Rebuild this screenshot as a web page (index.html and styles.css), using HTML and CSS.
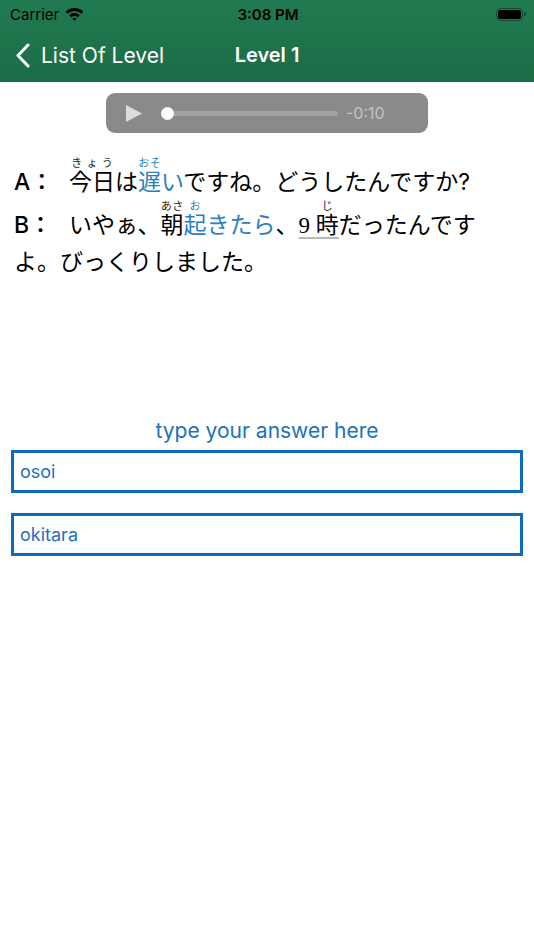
FILE: index.html
```html
<!DOCTYPE html>
<html lang="ja">
<head>
  <meta charset="UTF-8">
  <title>Level 1</title>
  <link rel="stylesheet" href="styles.css">
</head>
<body>

  <header class="topbar">
    <div class="status-bar">
      <div class="carrier">
        Carrier
        <svg class="wifi" width="19" height="13" viewBox="0 0 18 13">
          <path d="M0.16 3.66 A12.5 12.5 0 0 1 17.84 3.66 L15.72 5.78 A9.5 9.5 0 0 0 2.28 5.78 Z"/>
          <path d="M3.7 7.2 A7.5 7.5 0 0 1 14.3 7.2 L12.18 9.32 A4.5 4.5 0 0 0 5.82 9.32 Z"/>
          <path d="M9 12.8 L6.9 10.7 A3 3 0 0 1 11.1 10.7 Z"/>
        </svg>
      </div>
      <div class="clock">3:08 PM</div>
      <div class="battery-wrap">
        <div class="battery"><span class="battery-level"></span></div>
        <span class="battery-nub"></span>
      </div>
    </div>
    <nav class="nav-bar">
      <a class="back-link" href="#">
        <svg width="14" height="25" viewBox="0 0 14 25">
          <path d="M12 2 L2 12.5 L12 23" fill="none" stroke="#fff" stroke-width="3" stroke-linecap="round" stroke-linejoin="round"/>
        </svg>
        List Of Level
      </a>
      <h1 class="nav-title">Level 1</h1>
      <div></div>
    </nav>
  </header>

  <div class="player">
    <svg class="play-btn" width="16" height="17" viewBox="0 0 16 17">
      <path d="M0 0 L16 8.5 L0 17 Z"/>
    </svg>
    <div class="track">
      <span class="thumb"></span>
    </div>
    <span class="time-left">-0:10</span>
  </div>

  <div class="dialog">
    <p class="line">
      <span class="speaker">A：</span><ruby>今日<rt>きょう</rt></ruby>は<ruby class="target">遅<rt>おそ</rt></ruby><span class="target">い</span>ですね。どうしたんですか<span class="latin">?</span>
    </p>
    <p class="line">
      <span class="speaker">B：</span>いやぁ、<ruby>朝<rt>あさ</rt></ruby><ruby class="target">起<rt>お</rt></ruby><span class="target">きたら</span>、<span class="counter"><span class="digit">9 </span><ruby>時<rt>じ</rt></ruby></span>だったんですよ。びっくりしました。
    </p>
  </div>

  <section class="answers">
    <div class="answers-title">type your answer here</div>
    <input class="answer-input" type="text" value="osoi">
    <input class="answer-input" type="text" value="okitara">
  </section>

</body>
</html>
```

FILE: styles.css
```css
* {
  box-sizing: border-box;
}

body {
  margin: 0;
  padding: 0;
  background: #fff;
  font-family: Inter, "Noto Sans CJK JP", sans-serif;
  color: #000;
}

.topbar {
  height: 82px;
  background: linear-gradient(#217b51, #1c6c46);
}

.status-bar {
  height: 28px;
  display: grid;
  grid-template-columns: 1fr auto 1fr;
  align-items: center;
  padding: 0 8px 0 10px;
  font-size: 15px;
}

.carrier {
  display: flex;
  align-items: center;
  gap: 6px;
}

.wifi path {
  fill: #000;
}

.clock {
  font-weight: 600;
}

.battery-wrap {
  justify-self: end;
  display: flex;
  align-items: center;
}

.battery {
  width: 27px;
  height: 13px;
  border: 1px solid #10502f;
  border-radius: 4px;
  padding: 1px;
  display: flex;
}

.battery-level {
  flex: 1;
  background: #000;
  border-radius: 2px;
}

.battery-nub {
  width: 2px;
  height: 4px;
  margin-left: 1px;
  background: #10502f;
  border-radius: 0 1px 1px 0;
}

.nav-bar {
  height: 54px;
  display: grid;
  grid-template-columns: 1fr auto 1fr;
  align-items: center;
  color: #fff;
}

.back-link {
  display: flex;
  align-items: center;
  gap: 11px;
  padding-left: 16px;
  color: #fff;
  text-decoration: none;
  font-size: 21px;
}

.nav-title {
  margin: 0;
  font-size: 20px;
  font-weight: 600;
}

.player {
  width: 322px;
  height: 40px;
  margin: 11px auto 0;
  background: #8a8a8a;
  border-radius: 9px;
  display: flex;
  align-items: center;
  padding: 0 0 0 20px;
}

.play-btn path {
  fill: #dcdcdc;
}

.track {
  position: relative;
  width: 171px;
  height: 5px;
  margin-left: 25px;
  background: #a2a2a2;
  border-radius: 3px;
}

.thumb {
  position: absolute;
  left: -6px;
  top: -4px;
  width: 13px;
  height: 13px;
  border-radius: 50%;
  background: #fff;
}

.time-left {
  margin-left: 8px;
  color: #c4c4c4;
  font-size: 16px;
}

.dialog {
  padding: 24px 40px 0 14px;
  font-family: "Noto Sans CJK JP", sans-serif;
  font-size: 23px;
}

.line {
  margin: 0;
  line-height: 35px;
}

.speaker {
  display: inline-block;
  width: 55px;
  font-family: Inter, "Noto Sans CJK JP", sans-serif;
  font-weight: 500;
}

rt {
  font-size: 11px;
  color: #222;
}

.target,
.target rt {
  color: #2b7fc2;
}

.latin {
  font-family: Inter, sans-serif;
}

.counter {
  text-decoration: underline;
  text-decoration-color: #b8b8b8;
  text-underline-offset: 4px;
}

.digit {
  font-family: "Liberation Serif", serif;
}

.answers {
  margin-top: 140px;
  padding: 0 11px;
  display: flex;
  flex-direction: column;
}

.answers-title {
  text-align: center;
  color: #1d71bd;
  font-size: 21px;
  margin-bottom: 7px;
}

.answer-input {
  height: 43px;
  margin-bottom: 20px;
  border: 3px solid #0f6cbd;
  border-radius: 0;
  padding: 0 6px;
  font-family: Inter, sans-serif;
  font-size: 18px;
  color: #1d71bd;
  outline: none;
}
```
